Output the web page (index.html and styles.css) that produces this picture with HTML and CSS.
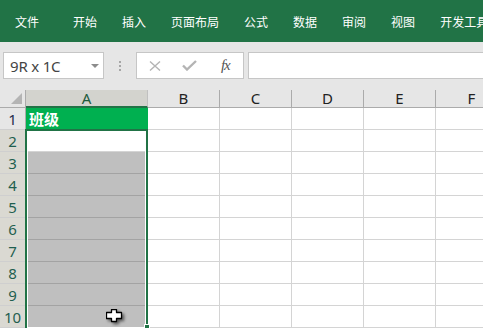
FILE: index.html
```html
<!DOCTYPE html>
<html lang="zh">
<head>
<meta charset="utf-8">
<title>Excel</title>
<link rel="stylesheet" href="styles.css">
</head>
<body>
<div class="ribbon">
  <span class="tab tab-file">文件</span>
  <span class="tab">开始</span>
  <span class="tab">插入</span>
  <span class="tab">页面布局</span>
  <span class="tab">公式</span>
  <span class="tab">数据</span>
  <span class="tab">审阅</span>
  <span class="tab">视图</span>
  <span class="tab">开发工具</span>
</div>
<div class="fbar">
  <div class="namebox"><span class="nb-text">9R x 1C</span><span class="caret"></span></div>
  <div class="dots"><i></i><i></i><i></i></div>
  <div class="btns">
    <span class="slot"><svg width="12" height="10" viewBox="0 0 12 10"><path d="M1 0.5 L11 9.5 M11 0.5 L1 9.5" stroke="#b4b4b4" stroke-width="1.4" fill="none"/></svg></span>
    <span class="slot"><svg width="15" height="11" viewBox="0 0 15 11"><path d="M1 5.5 L5 9.5 L14 1" stroke="#b4b4b4" stroke-width="2.4" fill="none"/></svg></span>
    <span class="slot fx">fx</span>
  </div>
  <div class="finput"></div>
</div>
<div class="sheet">
  <div class="grid">
    <div class="corner"><span class="tri"></span></div>
    <div class="ch sel">A</div><div class="ch">B</div><div class="ch">C</div><div class="ch">D</div><div class="ch">E</div><div class="ch">F</div>

    <div class="rh">1</div><div class="c a1">班级</div><div class="c"></div><div class="c"></div><div class="c"></div><div class="c"></div><div class="c"></div>
    <div class="rh sel">2</div><div class="c"></div><div class="c"></div><div class="c"></div><div class="c"></div><div class="c"></div><div class="c"></div>
    <div class="rh sel">3</div><div class="c gray"></div><div class="c"></div><div class="c"></div><div class="c"></div><div class="c"></div><div class="c"></div>
    <div class="rh sel">4</div><div class="c gray"></div><div class="c"></div><div class="c"></div><div class="c"></div><div class="c"></div><div class="c"></div>
    <div class="rh sel">5</div><div class="c gray"></div><div class="c"></div><div class="c"></div><div class="c"></div><div class="c"></div><div class="c"></div>
    <div class="rh sel">6</div><div class="c gray"></div><div class="c"></div><div class="c"></div><div class="c"></div><div class="c"></div><div class="c"></div>
    <div class="rh sel">7</div><div class="c gray"></div><div class="c"></div><div class="c"></div><div class="c"></div><div class="c"></div><div class="c"></div>
    <div class="rh sel">8</div><div class="c gray"></div><div class="c"></div><div class="c"></div><div class="c"></div><div class="c"></div><div class="c"></div>
    <div class="rh sel">9</div><div class="c gray"></div><div class="c"></div><div class="c"></div><div class="c"></div><div class="c"></div><div class="c"></div>
    <div class="rh sel">10</div><div class="c gray"></div><div class="c"></div><div class="c"></div><div class="c"></div><div class="c"></div><div class="c"></div>
  </div>
  <div class="selection"></div>
  <div class="handle"></div>
  <svg class="cursor" width="18" height="16" viewBox="0 0 18 16">
    <path d="M5.5 0.5 H10.5 V3.5 H15.5 V9.5 H10.5 V12.5 H5.5 V9.5 H0.5 V3.5 H5.5 Z" fill="#fff" stroke="#000" stroke-width="1.3" stroke-linejoin="round"/>
  </svg>
</div>
</body>
</html>
```

FILE: styles.css
```css
* { box-sizing: border-box; margin: 0; padding: 0; }
html, body { width: 483px; height: 328px; overflow: hidden; background: #fff; }
body { font-family: "Noto Sans", "Noto Sans CJK SC", sans-serif; }

.ribbon {
  height: 42px;
  background: #217346;
  display: flex;
  align-items: center;
  padding: 2px 0 0 15px;
  white-space: nowrap;
  overflow: hidden;
}
.tab {
  color: #fff;
  font-family: "Noto Sans CJK SC", sans-serif;
  font-size: 12px;
  line-height: 16px;
  margin-right: 25px;
  flex: none;
}
.tab-file { margin-right: 34px; }

.fbar {
  height: 48px;
  background: #e6e6e6;
  display: flex;
  align-items: flex-start;
  padding: 10px 0 0 3px;
}
.namebox {
  width: 101px;
  height: 27px;
  background: #fff;
  border: 1px solid #c6c6c6;
  display: flex;
  align-items: center;
  justify-content: space-between;
  padding: 0 4px 0 6px;
}
.nb-text { font-size: 15px; color: #444; letter-spacing: -0.2px; }
.caret {
  width: 0; height: 0;
  border-left: 4px solid transparent;
  border-right: 4px solid transparent;
  border-top: 4px solid #8c8c8c;
}
.dots {
  width: 32px;
  height: 27px;
  display: flex;
  flex-direction: column;
  align-items: center;
  justify-content: center;
  gap: 2px;
}
.dots i { display: block; width: 2px; height: 2px; background: #a6a6a6; }
.btns {
  width: 108px;
  height: 27px;
  background: #fff;
  border: 1px solid #c6c6c6;
  display: flex;
  align-items: center;
}
.slot { width: 36px; display: flex; justify-content: center; align-items: center; }
.slot svg { display: block; }
.fx {
  font-family: "Liberation Serif", serif;
  font-style: italic;
  font-size: 15px;
  color: #555;
  letter-spacing: -1px;
}
.finput {
  flex: 1;
  margin-left: 4px;
  height: 27px;
  background: #fff;
  border: 1px solid #c6c6c6;
  border-right: none;
}

.sheet { position: relative; }
.grid {
  display: grid;
  grid-template-columns: 26px 122px 72px 72px 72px 72px 72px;
  grid-template-rows: 18px repeat(10, 22px);
  width: 508px;
}
.corner {
  background: #e6e6e6;
  border-right: 1px solid #ababab;
  border-bottom: 1px solid #ababab;
  position: relative;
}
.tri {
  position: absolute;
  right: 3px;
  bottom: 3px;
  width: 0; height: 0;
  border-left: 11px solid transparent;
  border-bottom: 11px solid #b4b4b4;
}
.ch {
  background: #e6e6e6;
  border-right: 1px solid #ababab;
  border-bottom: 1px solid #ababab;
  font-size: 15px;
  line-height: 17px;
  text-align: center;
  color: #222;
}
.ch.sel {
  background: #d3d3ce;
  color: #1d5b3c;
  border-bottom: 2px solid #217346;
  border-right-color: #c0c0c0;
}
.rh {
  background: #e6e6e6;
  border-right: 1px solid #ababab;
  border-bottom: 1px solid #cfcfcf;
  font-size: 15px;
  line-height: 22px;
  text-align: center;
  color: #1f2d4d;
}
.rh.sel { background: #dad9d2; color: #1f5f4f; }
.c {
  border-right: 1px solid #d4d4d4;
  border-bottom: 1px solid #d4d4d4;
}
.a1 {
  background: #00b050;
  border-right-color: #00b050;
  border-bottom-color: #00b050;
  color: #fff;
  font-family: "Noto Sans CJK SC", sans-serif;
  font-weight: bold;
  font-size: 15px;
  line-height: 21px;
  padding-left: 3px;
}
.gray { background: #bfbfbf; border-bottom-color: #a3a3a3; }

.selection {
  position: absolute;
  left: 25px;
  top: 39px;
  width: 123px;
  height: 201px;
  border: 2px solid #217346;
  box-shadow: inset 0 0 0 1px #fff;
}
.handle {
  position: absolute;
  left: 144px;
  top: 234px;
  width: 6px;
  height: 6px;
  background: #217346;
  border: 1px solid #fff;
}
.cursor {
  position: absolute;
  left: 106px;
  top: 219px;
  filter: drop-shadow(2px 2px 1.5px rgba(0,0,0,0.55));
}
```
